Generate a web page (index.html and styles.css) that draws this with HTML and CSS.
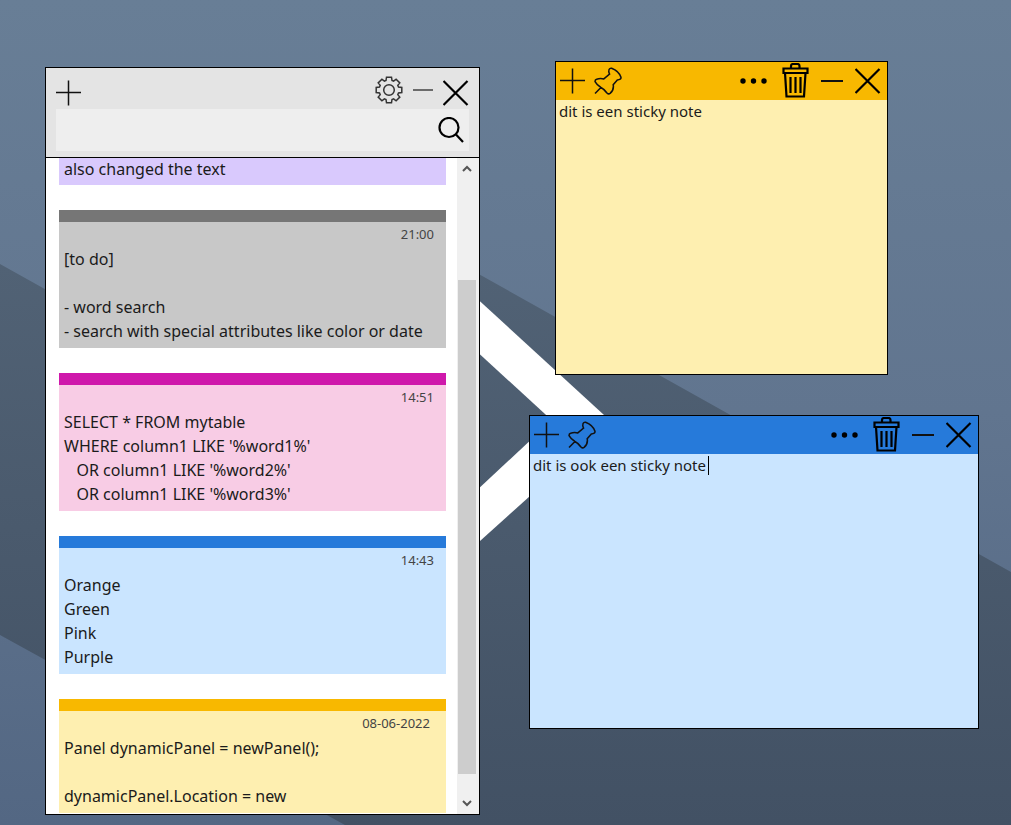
FILE: index.html
```html
<!DOCTYPE html>
<html lang="nl">
<head>
<meta charset="utf-8">
<title>Sticky notes</title>
<link rel="stylesheet" href="styles.css">
</head>
<body>
<svg class="sprite" aria-hidden="true">
  <symbol id="plus" viewBox="0 0 26 26"><path d="M12.500 0.500V25.500M0 12.500H25"/></symbol>
  <symbol id="minus" viewBox="0 0 22 26"><path d="M0 13H22"/></symbol>
  <symbol id="close" viewBox="0 0 26 26"><path d="M0.500 1L24.500 25M24.500 1L0.500 25"/></symbol>
  <symbol id="gear" viewBox="-14 -14 28 28"><path d="M-3 -9.500L-2.500 -12.800H2.500L3 -9.500L4.600 -8.800L7.100 -10.800L10.800 -7.100L8.800 -4.600L9.500 -3L12.800 -2.500V2.500L9.500 3L8.800 4.600L10.800 7.100L7.100 10.800L4.600 8.800L3 9.500L2.500 12.800H-2.500L-3 9.500L-4.600 8.800L-7.100 10.800L-10.800 7.100L-8.800 4.600L-9.500 3L-12.800 2.500V-2.500L-9.500 -3L-8.800 -4.600L-10.800 -7.100L-7.100 -10.800L-4.600 -8.800Z"/><circle r="5.300"/></symbol>
  <symbol id="search" viewBox="0 0 26 26"><circle cx="11" cy="10.500" r="9.500"/><path d="M18 17.500L25 25"/></symbol>
  <symbol id="pin" viewBox="0 0 27 27"><path d="M14.300 3.500Q14.500 1 17 1.300Q24 4 26 10Q26.300 12.300 22.500 12.500L18.500 17Q19.500 22 15.500 25.500Q14 26.500 12.500 25Q10 21.500 6.700 19.800Q3 17.500 1 14Q1 12.300 2.500 11.800Q6 10.500 9.500 11.500L15 6.800Q14 5 14.300 3.500ZM6.700 19.800L1 25.500"/></symbol>
  <symbol id="dots" viewBox="0 0 28 26"><g fill="currentColor" stroke="none"><circle cx="3" cy="13" r="2.700"/><circle cx="13.500" cy="13" r="2.700"/><circle cx="24" cy="13" r="2.700"/></g></symbol>
  <symbol id="trash" viewBox="0 0 27 36"><path d="M9 5V3Q9 1 11 1H15.500Q17.500 1 17.500 3V5M1.500 5.500H25.500V10H1.500ZM3 10L4.500 33.500H22L23.500 10"/><path class="thin" d="M8.500 14V30M13.500 14V30M18.500 14V30"/></symbol>
  <symbol id="up" viewBox="0 0 10 8"><path d="M1 6L5 2L9 6"/></symbol>
  <symbol id="down" viewBox="0 0 10 8"><path d="M1 2L5 6L9 2"/></symbol>
</svg>
<main class="desktop">
  <svg class="wallpaper" viewBox="0 0 1011 825" preserveAspectRatio="none" aria-hidden="true">
    <defs>
      <linearGradient id="sky" x1="0" y1="0" x2="0" y2="1"><stop offset="0" stop-color="#687e96"/><stop offset=".5" stop-color="#61758f"/><stop offset="1" stop-color="#536783"/></linearGradient>
      <linearGradient id="shade" gradientUnits="userSpaceOnUse" x1="0" y1="230" x2="0" y2="825"><stop offset="0" stop-color="#526376"/><stop offset="1" stop-color="#425164"/></linearGradient>
    </defs>
    <path fill="url(#sky)" d="M0 0H1011V825H0Z"/>
    <path fill="url(#shade)" d="M0 264L240 398L400 230L1011 572V825H345L0 635Z"/>
    <path fill="#fff" d="M460 283L604 415L640 448H582L460 336Z"/>
    <path fill="#fff" d="M460 506L550 422V478L460 559Z"/>
  </svg>

  <section class="window overview" aria-label="Notes">
    <header class="overview-head">
      <div class="toolbar">
        <button class="tool" aria-label="New note"><svg class="i26"><use href="#plus"/></svg></button>
        <span class="spacer"></span>
        <button class="tool gear" aria-label="Settings"><svg class="i28"><use href="#gear"/></svg></button>
        <button class="tool gear" aria-label="Minimize"><svg class="i20"><use href="#minus"/></svg></button>
        <button class="tool bold" aria-label="Close"><svg class="i26"><use href="#close"/></svg></button>
      </div>
      <form class="search">
        <input type="text" aria-label="Search notes">
        <button class="tool bold" type="button" aria-label="Search"><svg class="i26"><use href="#search"/></svg></button>
      </form>
    </header>
    <div class="overview-body">
      <div class="list">
        <article class="card purple tail"><p>also changed the text</p></article>
        <article class="card gray"><time>21:00</time><p>[to do]

- word search
- search with special attributes like color or date</p></article>
        <article class="card pink"><time>14:51</time><p>SELECT * FROM mytable
WHERE column1 LIKE '%word1%'
   OR column1 LIKE '%word2%'
   OR column1 LIKE '%word3%'</p></article>
        <article class="card blue"><time>14:43</time><p>Orange
Green
Pink
Purple</p></article>
        <article class="card yellow"><time class="date">08-06-2022</time><p>Panel dynamicPanel = newPanel();

dynamicPanel.Location = new
</p></article>
      </div>
      <div class="scrollbar">
        <button class="tool" aria-label="Scroll up"><svg><use href="#up"/></svg></button>
        <div class="track"><div class="thumb"></div></div>
        <button class="tool" aria-label="Scroll down"><svg><use href="#down"/></svg></button>
      </div>
    </div>
  </section>

  <section class="window note note-a yellow" aria-label="Yellow note">
    <header class="note-bar">
      <button class="tool" aria-label="New note"><svg class="i26"><use href="#plus"/></svg></button>
      <button class="tool" aria-label="Pin"><svg class="i28"><use href="#pin"/></svg></button>
      <span class="spacer"></span>
      <button class="tool" aria-label="More"><svg class="i28"><use href="#dots"/></svg></button>
      <button class="tool bold" aria-label="Delete"><svg class="bin"><use href="#trash"/></svg></button>
      <button class="tool dash" aria-label="Minimize"><svg class="i22"><use href="#minus"/></svg></button>
      <button class="tool bold" aria-label="Close"><svg class="i26"><use href="#close"/></svg></button>
    </header>
    <textarea aria-label="Note text" spellcheck="false">dit is een sticky note</textarea>
  </section>

  <section class="window note note-b blue" aria-label="Blue note">
    <header class="note-bar">
      <button class="tool" aria-label="New note"><svg class="i26"><use href="#plus"/></svg></button>
      <button class="tool" aria-label="Pin"><svg class="i28"><use href="#pin"/></svg></button>
      <span class="spacer"></span>
      <button class="tool" aria-label="More"><svg class="i28"><use href="#dots"/></svg></button>
      <button class="tool bold" aria-label="Delete"><svg class="bin"><use href="#trash"/></svg></button>
      <button class="tool dash" aria-label="Minimize"><svg class="i22"><use href="#minus"/></svg></button>
      <button class="tool bold" aria-label="Close"><svg class="i26"><use href="#close"/></svg></button>
    </header>
    <textarea aria-label="Note text" spellcheck="false">dit is ook een sticky note</textarea>
    <span class="caret"></span>
  </section>
</main>
</body>
</html>
```
FILE: styles.css
```css
* { box-sizing: border-box; }
body { margin: 0; font: 16px/24px "Noto Sans", "Open Sans", sans-serif; color: #1b1b1b; }
.sprite { position: absolute; width: 0; height: 0; }
.desktop { position: relative; min-height: 100vh; overflow: hidden; }
.wallpaper { position: absolute; inset: 0; width: 100%; height: 100%; }

.window { position: absolute; display: flex; flex-direction: column; border: 1px solid #000; }
.overview { left: 45px; top: 67px; width: 435px; height: 748px; background: #fff; }
.note-a { left: 555px; top: 61px; width: 333px; height: 314px; }
.note-b { left: 529px; top: 415px; width: 450px; height: 314px; }

.yellow { --bar: #f8b800; --paper: #feefb0; }
.blue { --bar: #267ada; --paper: #cae5ff; }
.pink { --bar: #cf18ab; --paper: #f8cce5; }
.gray { --bar: #767676; --paper: #c8c8c8; }
.purple { --bar: #8e5cd9; --paper: #d9c9fd; }

.tool { display: flex; align-items: center; justify-content: center; padding: 0; border: 0; background: none; color: #000; }
.tool svg { display: block; fill: none; stroke: #111; stroke-width: 1.5; }
.tool.bold svg { stroke: #000; stroke-width: 2.2; }
.tool.dash svg { stroke-width: 2; }
.tool .thin { stroke-width: 1.5; }
.tool.gear svg { stroke: #333; stroke-width: 1.5; }
.i20 { width: 20px; height: 26px; }
.i22 { width: 22px; height: 26px; }
.i26 { width: 26px; height: 26px; }
.i28 { width: 28px; height: 28px; }
.bin { width: 27px; height: 36px; }
.spacer { flex: 1; }

.overview-head { padding: 0 10px 6px; background: #e4e4e4; border-bottom: 1px solid #000; }
.toolbar { display: flex; align-items: center; gap: 10px; height: 41px; padding-top: 8px; }
.toolbar .gear { padding-bottom: 6px; }
.search { display: flex; height: 42px; padding-right: 5px; background: #eee; }
.search input { flex: 1; min-width: 0; border: 0; background: none; font: inherit; outline: 0; }

.overview-body { display: flex; flex: 1; min-height: 0; }
.list { flex: 1; display: flex; flex-direction: column; gap: 25px; padding: 0 11px 0 13px; overflow: hidden; }
.card { flex: none; padding: 0 5px 5px; background: var(--paper); border-top: 12px solid var(--bar); }
.card.tail { height: 27px; padding: 0 5px; border-top: 0; }
.card p { margin: 0; white-space: pre-wrap; }
.card.tail p { line-height: 22px; }
.card time { display: block; height: 25px; padding-right: 7px; text-align: right; font-size: 13px; color: #444; }
.card time.date { padding-right: 11px; }

.scrollbar { width: 22px; display: flex; flex-direction: column; background: #f0f0f0; }
.scrollbar .tool { height: 22px; padding-right: 2px; }
.scrollbar svg { width: 10px; height: 8px; stroke: #555; stroke-width: 2; }
.track { flex: 1; padding: 100px 3px 18px 1px; display: flex; }
.thumb { flex: 1; background: #cdcdcd; }

.note { background: var(--paper); }
.note-bar { display: flex; align-items: center; gap: 12px; height: 38px; padding: 0 6px 0 4px; background: var(--bar); }
.note-bar .tool:first-child { margin-right: -4px; }
.note textarea { flex: 1; padding: 0 3px; border: 0; outline: 0; resize: none; background: none; font: inherit; font-size: 15px; line-height: 22px; color: inherit; }
.note-bar .tool:nth-child(4) { margin-right: 2px; }
.caret { position: absolute; left: 178px; top: 40px; width: 1px; height: 19px; background: #000; }
```
